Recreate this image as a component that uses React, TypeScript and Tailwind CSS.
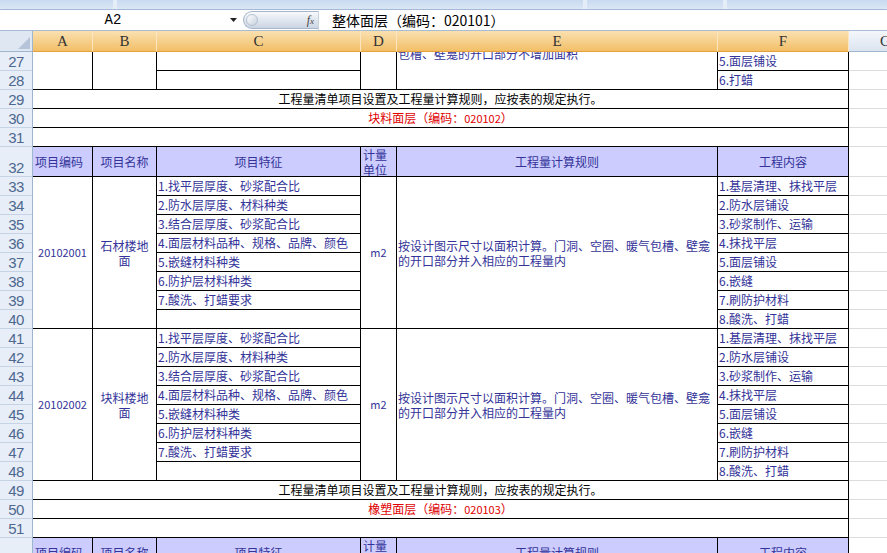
import type { ReactNode } from "react";

const rowNums = Array.from({ length: 26 }, (_, i) => 27 + i);

const features = [
  "1.找平层厚度、砂浆配合比",
  "2.防水层厚度、材料种类",
  "3.结合层厚度、砂浆配合比",
  "4.面层材料品种、规格、品牌、颜色",
  "5.嵌缝材料种类",
  "6.防护层材料种类",
  "7.酸洗、打蜡要求",
  "",
];

const works = [
  "1.基层清理、抹找平层",
  "2.防水层铺设",
  "3.砂浆制作、运输",
  "4.抹找平层",
  "5.面层铺设",
  "6.嵌缝",
  "7.刷防护材料",
  "8.酸洗、打蜡",
];

const columns = [
  { key: "A", w: "w-[60px]" },
  { key: "B", w: "w-[64px]" },
  { key: "C", w: "w-[204px]" },
  { key: "D", w: "w-[36px]" },
  { key: "E", w: "w-[321px]" },
  { key: "F", w: "w-[131px]" },
];

function Stack({ items, width }: { items: string[]; width: string }) {
  return (
    <div className={`flex shrink-0 flex-col border-r border-black ${width}`}>
      {items.map((t, i) => (
        <div
          key={i}
          className={`flex items-center whitespace-nowrap pl-[1px] ${
            i < items.length - 1 ? "h-[19px] shrink-0 border-b border-black" : "flex-1"
          }`}
        >
          {t}
        </div>
      ))}
    </div>
  );
}

function Note({ children, red }: { children: ReactNode; red?: boolean }) {
  return (
    <div
      className={`flex h-[19px] shrink-0 items-center justify-center whitespace-nowrap border-b border-r border-black ${
        red ? "text-[#e00000]" : "text-black"
      }`}
    >
      {children}
    </div>
  );
}

function HeadRow() {
  return (
    <div className="flex h-[30px] shrink-0 border-b border-black bg-[#ccccff] text-[#333399]">
      <div className="flex w-[60px] items-center border-r border-black pl-[2px]">项目编码</div>
      <div className="flex w-[64px] items-center justify-center border-r border-black">项目名称</div>
      <div className="flex w-[204px] items-center justify-center border-r border-black">项目特征</div>
      <div className="flex w-[36px] items-center border-r border-black pl-[2px]">
        <p className="leading-[15px]">
          计量
          <br />
          单位
        </p>
      </div>
      <div className="flex w-[321px] items-center justify-center border-r border-black">工程量计算规则</div>
      <div className="flex w-[131px] items-center justify-center border-r border-black">工程内容</div>
    </div>
  );
}

function ItemBlock({ code, name1, name2 }: { code: string; name1: string; name2: string }) {
  return (
    <div className="flex h-[152px] shrink-0 border-b border-black text-[#333399]">
      <div className="flex w-[60px] items-center justify-center border-r border-black text-[11px]">{code}</div>
      <div className="flex w-[64px] items-center justify-center border-r border-black">
        <p className="text-center leading-[15px]">
          {name1}
          <br />
          {name2}
        </p>
      </div>
      <Stack items={features} width="w-[204px]" />
      <div className="flex w-[36px] items-center justify-center border-r border-black text-[11px]">m2</div>
      <div className="flex w-[321px] items-center border-r border-black pl-[1px]">
        <p className="whitespace-nowrap leading-[15px]">
          按设计图示尺寸以面积计算。门洞、空圈、暖气包槽、壁龛
          <br />
          的开口部分并入相应的工程量内
        </p>
      </div>
      <Stack items={works} width="w-[131px]" />
    </div>
  );
}

export default function App() {
  return (
    <div className="h-[553px] w-[887px] overflow-hidden bg-white font-['Noto_Sans_CJK_SC',sans-serif] text-[12px]">
      {/* ribbon edge */}
      <div className="flex h-[10px] gap-[4px] border-b border-[#a3b9d5] bg-[#e4edf8]">
        <div className="w-[113px] rounded-b-[3px] bg-gradient-to-b from-[#c9dbf1] to-[#d9e6f5]" />
        <div className="w-[466px] rounded-b-[3px] bg-gradient-to-b from-[#c9dbf1] to-[#d9e6f5]" />
        <div className="w-[136px] rounded-b-[3px] bg-gradient-to-b from-[#c9dbf1] to-[#d9e6f5]" />
        <div className="flex-1 rounded-b-[3px] bg-gradient-to-b from-[#c9dbf1] to-[#d9e6f5]" />
      </div>

      {/* formula bar */}
      <div className="flex h-[21px] items-center border-b border-[#a9bcd5] bg-white">
        <div className="flex w-[226px] justify-center font-['Liberation_Mono',monospace] text-[14px] text-black">
          A2
        </div>
        <div className="flex w-[15px] justify-center">
          <svg width="7" height="4" viewBox="0 0 7 4">
            <polygon points="0,0 7,0 3.5,4" fill="#222" />
          </svg>
        </div>
        <div className="ml-[2px] flex h-[18px] w-[75px] items-center rounded-l-full border-y border-l border-[#a8b6c9] bg-gradient-to-b from-[#f7f9fc] to-[#cbd5e3]">
          <div className="ml-[2px] h-[12px] w-[12px] rounded-full border border-[#b3c0d1] bg-gradient-to-br from-white to-[#c7d1de]" />
          <span className="ml-auto mr-[4px] font-['Liberation_Serif',serif] text-[12px] italic text-[#444]">
            f<span className="text-[9px]">x</span>
          </span>
        </div>
        <div className="h-[19px] w-px bg-[#c9d3e0]" />
        <div className="ml-[13px] whitespace-nowrap text-[14px] text-black">整体面层（编码：020101）</div>
      </div>

      {/* column headers */}
      <div className="flex h-[21px] font-['Liberation_Serif',serif] text-[15px] text-[#333]">
        <div className="w-[33px] border-b border-r border-[#9eb6ce] bg-[#dfe7f2]">
          <svg width="32" height="20" viewBox="0 0 32 20">
            <polygon points="30,6 30,18 18,18" fill="#b5c4d8" />
          </svg>
        </div>
        {columns.map((c) => (
          <div
            key={c.key}
            className={`flex items-center justify-center border-b border-r border-b-[#e59f3d] border-r-[#fbe6c0] bg-gradient-to-b from-[#fae0b0] to-[#f2bf66] ${c.w}`}
          >
            {c.key}
          </div>
        ))}
        <div className="flex flex-1 items-center overflow-hidden border-b border-[#9eb6ce] bg-gradient-to-b from-[#f4f7fb] to-[#dbe4ef] pl-[31px]">
          G
        </div>
      </div>

      {/* sheet */}
      <div className="flex">
        <div className="flex w-[33px] shrink-0 flex-col border-r border-[#9eb6ce] bg-[#e8eef7]">
          {rowNums.map((n) => (
            <div
              key={n}
              className={`flex shrink-0 items-end justify-center border-b border-[#c6d3e4] font-['Liberation_Sans',sans-serif] text-[15px] leading-[17px] tracking-[-0.5px] text-[#4d6890] ${
                n === 32 || n === 52 ? "h-[30px]" : "h-[19px]"
              }`}
            >
              {n}
            </div>
          ))}
        </div>

        <div className="flex w-[816px] shrink-0 flex-col">
          <div className="flex h-[38px] shrink-0 border-b border-black text-[#333399]">
            <div className="w-[60px] border-r border-black" />
            <div className="w-[64px] border-r border-black" />
            <Stack items={["", ""]} width="w-[204px]" />
            <div className="w-[36px] border-r border-black" />
            <div className="w-[321px] overflow-hidden border-r border-black pl-[1px]">
              <p className="mt-[-6px] whitespace-nowrap leading-[15px]">包槽、壁龛的开口部分不增加面积</p>
            </div>
            <Stack items={["5.面层铺设", "6.打蜡"]} width="w-[131px]" />
          </div>

          <Note>工程量清单项目设置及工程量计算规则，应按表的规定执行。</Note>
          <Note red>
            块料面层（编码：<span className="text-[11px]">020102</span>）
          </Note>
          <Note>{""}</Note>
          <HeadRow />
          <ItemBlock code="20102001" name1="石材楼地" name2="面" />
          <ItemBlock code="20102002" name1="块料楼地" name2="面" />
          <Note>工程量清单项目设置及工程量计算规则，应按表的规定执行。</Note>
          <Note red>
            橡塑面层（编码：<span className="text-[11px]">020103</span>）
          </Note>
          <Note>{""}</Note>
          <HeadRow />
        </div>

        <div className="flex flex-1 flex-col">
          {rowNums.map((n) => (
            <div
              key={n}
              className={`shrink-0 border-b border-[#dadcdd] ${n === 32 || n === 52 ? "h-[30px]" : "h-[19px]"}`}
            />
          ))}
        </div>
      </div>
    </div>
  );
}
